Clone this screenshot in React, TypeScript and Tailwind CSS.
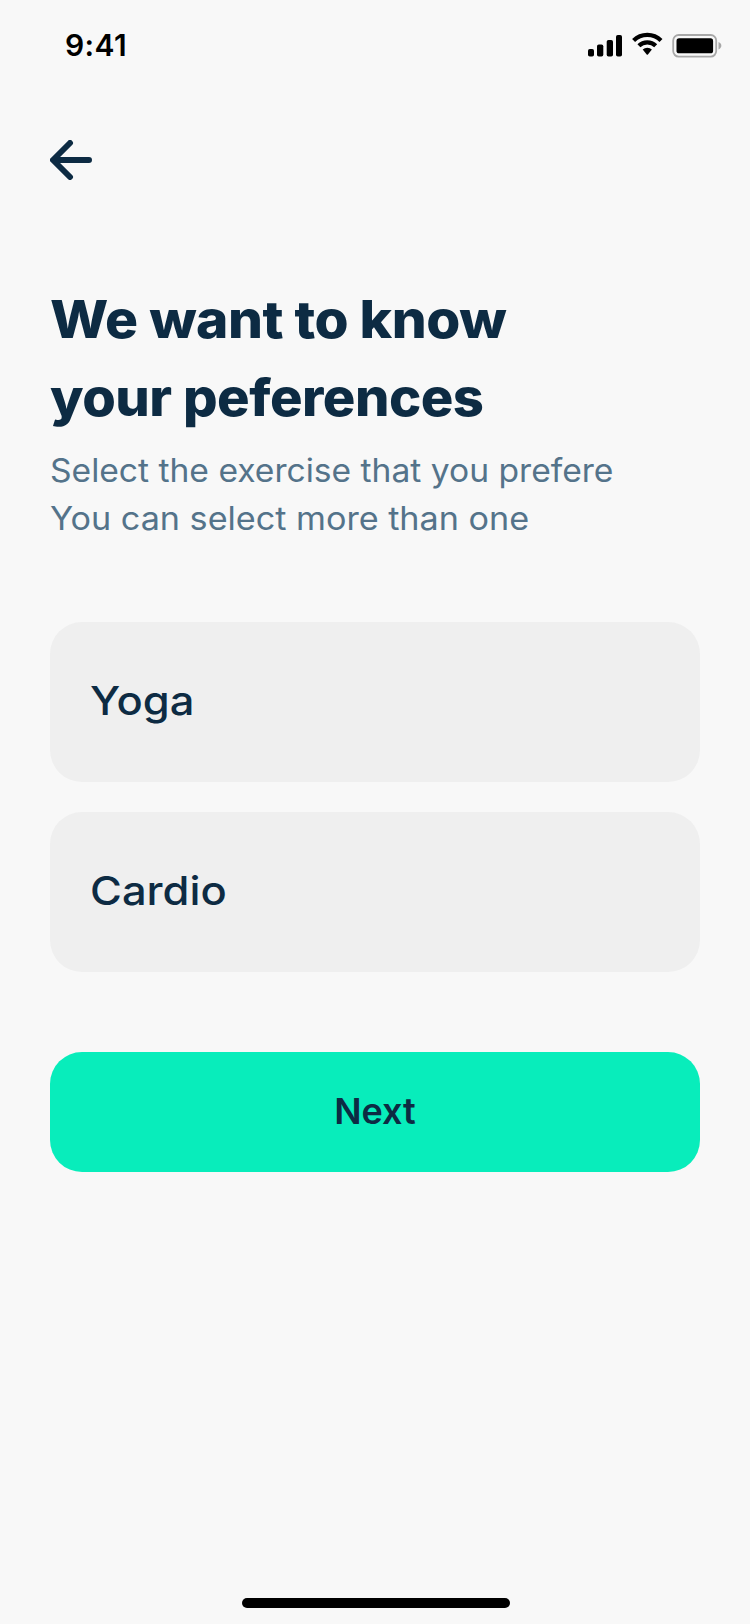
const options = ["Yoga", "Cardio"];

function StatusIcons() {
  return (
    <svg width="140" height="32" viewBox="0 0 140 32" fill="none" aria-hidden="true">
      <g fill="#000">
        <rect x="4" y="19" width="6" height="7.5" rx="1.8" />
        <rect x="13" y="14.5" width="6.3" height="12" rx="1.8" />
        <rect x="22.7" y="10" width="6.3" height="16.5" rx="1.8" />
        <rect x="32" y="5" width="6" height="21.5" rx="1.8" />
      </g>
      <g transform="translate(63.3 0)">
        <path d="M-13.7 10.5A19.4 19.4 0 0 1 13.7 10.5" stroke="#000" strokeWidth="4.2" />
        <path d="M-8.4 15.8A12 12 0 0 1 8.4 15.8" stroke="#000" strokeWidth="4.2" />
        <path d="M-4.6 19.6A6.6 6.6 0 0 1 4.6 19.6L.6 24.4Q0 25-.6 24.4Z" fill="#000" />
      </g>
      <rect x="89.2" y="5" width="43" height="21.6" rx="5.5" stroke="#a8a8a8" strokeWidth="1.8" />
      <rect x="92.5" y="8.3" width="36.6" height="15" rx="2.6" fill="#000" />
      <path d="M134.5 12.1C138.3 13.6 138.3 18 134.5 19.5Z" fill="#a8a8a8" />
    </svg>
  );
}

export default function App() {
  return (
    <div className="flex h-[1624px] w-[750px] flex-col bg-[#f8f8f8] font-['Inter','Liberation_Sans',sans-serif] text-[#0d2b43]">
      <header className="flex h-[92px] items-start justify-between pl-[65px] pr-[26px] pt-[30px]">
        <span className="-mt-px text-[30px] leading-8 font-semibold tracking-[0.4px] text-black">9:41</span>
        <StatusIcons />
      </header>

      <main className="flex flex-1 flex-col px-[50px] pt-12">
        <button type="button" aria-label="Back" className="h-10 w-[42px]">
          <svg width="42" height="40" viewBox="0 0 42 40" fill="none" stroke="currentColor" strokeWidth="6" strokeLinecap="round" strokeLinejoin="round" aria-hidden="true">
            <path d="M20 3L3 20L20 37M4 20H39" />
          </svg>
        </button>

        <h1 className="mt-[101px] text-[52px] leading-[78px] font-extrabold tracking-[-0.5px] whitespace-nowrap">
          <span className="block origin-left scale-x-[1.06]">We want to know</span>
          <span className="block origin-left scale-x-[1.045]">your peferences</span>
        </h1>
        <p className="mt-[10px] text-[32px] leading-[48px] whitespace-nowrap text-[#54738a]">
          <span className="block origin-left scale-x-[1.05]">Select the exercise that you prefere</span>
          <span className="block origin-left scale-x-[1.067]">You can select more than one</span>
        </p>

        <div className="mt-[79px] flex flex-col gap-[30px]">
          {options.map((option) => (
            <button key={option} type="button" className="flex h-40 items-center rounded-[32px] bg-[#efefef] pb-0.5 pl-10 text-[40px] leading-[60px] font-medium">
              <span className="block origin-left scale-x-[1.087]">{option}</span>
            </button>
          ))}
        </div>

        <button type="button" className="mt-20 flex h-[120px] items-center justify-center rounded-[32px] bg-[#08edbb] pb-0.5 text-4xl leading-[54px] font-semibold">
          Next
        </button>
      </main>

      <footer className="flex h-[26px] items-start pl-[242px]">
        <div className="h-[10px] w-[268px] rounded-full bg-black" />
      </footer>
    </div>
  );
}
